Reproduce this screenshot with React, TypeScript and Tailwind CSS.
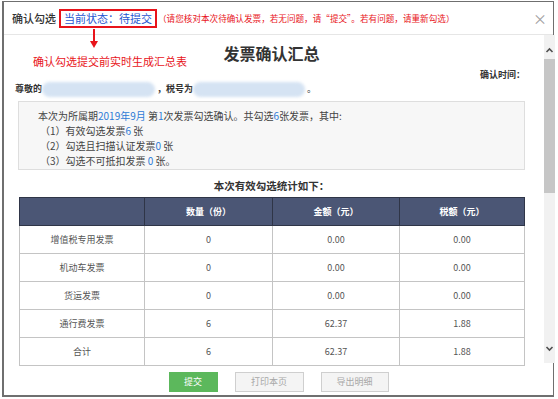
import React from 'react';

interface StatRow {
  name: string;
  count: string;
  amount: string;
  tax: string;
}

const rows: StatRow[] = [
  { name: '增值税专用发票', count: '0', amount: '0.00', tax: '0.00' },
  { name: '机动车发票', count: '0', amount: '0.00', tax: '0.00' },
  { name: '货运发票', count: '0', amount: '0.00', tax: '0.00' },
  { name: '通行费发票', count: '6', amount: '62.37', tax: '1.88' },
  { name: '合计', count: '6', amount: '62.37', tax: '1.88' },
];

const Blurred = ({ width }: { width: string }) => (
  <span className={`inline-block h-[15px] ${width} rounded-full bg-[#d5e3f3] blur-[1.5px]`} />
);

export default function App() {
  return (
    <div className="w-[558px] h-[399px] bg-white pt-px pl-[2px] font-['Noto_Sans_CJK_SC',sans-serif] overflow-hidden">
      <div className="relative w-[552px] h-[396px] border-t border-r border-l-2 border-b-2 border-[#6f6f6f] flex flex-col">
        {/* Header */}
        <div className="h-[33px] shrink-0 border-b border-[#e6e6e6] flex items-center pl-2 pr-[6px]">
          <span className="text-[11px] text-[#333] font-medium">确认勾选</span>
          <span className="ml-[3px] h-[19px] px-[3px] border-2 border-[#e8141b] flex items-center text-[11px] text-[#1f55d0]">
            当前状态：待提交
          </span>
          <span className="ml-[1px] text-[8.6px] text-[#e8141b] whitespace-nowrap">
            （请您核对本次待确认发票，若无问题，请“提交”。若有问题，请重新勾选）
          </span>
          <span className="ml-auto text-[14px] leading-none text-[#a0a0a0]">×</span>
        </div>

        {/* Body */}
        <div className="flex flex-1 min-h-0">
          <div className="flex-1 pl-[14px] pr-[19px] pt-[8px]">
            <h2 className="text-center text-[16px] leading-[20px] font-bold text-[#333]">发票确认汇总</h2>
            <div className="h-[12px] mt-[6px] flex justify-end items-center text-[9px] font-bold text-[#333]">
              确认时间：
            </div>
            <div className="h-[16px] flex items-center text-[9px] text-[#333] -ml-[3px]">
              <span className="font-bold">尊敬的</span>
              <Blurred width="w-[113px]" />
              <span className="font-bold ml-[2px]">，税号为</span>
              <Blurred width="w-[112px]" />
              <span className="ml-[2px]">。</span>
            </div>
            <div className="mt-[4px] h-[69px] border border-[#dedede] bg-[#f7f7f7] pl-[19px] pt-[6px] text-[10px] leading-[15px] text-[#444]">
              <p>
                本次为所属期<span className="text-[#2e7bd6]">2019年9月</span> 第<span className="text-[#2e7bd6]">1</span>次发票勾选确认。共勾选<span className="text-[#2e7bd6]">6</span>张发票，其中:
              </p>
              <p className="pl-[2px]">（1）有效勾选发票<span className="text-[#2e7bd6]">6</span> 张</p>
              <p className="pl-[2px]">（2）勾选且扫描认证发票<span className="text-[#2e7bd6]">0</span> 张</p>
              <p className="pl-[2px]">（3）勾选不可抵扣发票 <span className="text-[#2e7bd6]">0</span> 张。</p>
            </div>
            <h3 className="mt-[8px] text-center text-[10.5px] leading-[16px] font-bold text-[#333]">本次有效勾选统计如下：</h3>
            <table className="mt-[3px] ml-px w-[505px] border-collapse text-[9px] text-[#555] table-fixed">
              <colgroup>
                <col className="w-[125px]" />
                <col className="w-[128px]" />
                <col className="w-[127px]" />
                <col className="w-[125px]" />
              </colgroup>
              <thead>
                <tr className="h-[28px] bg-[#4b5675] text-white font-bold">
                  <th className="border border-[#2f3547]"></th>
                  <th className="border border-[#2f3547]">数量（份）</th>
                  <th className="border border-[#2f3547]">金额（元）</th>
                  <th className="border border-[#2f3547]">税额（元）</th>
                </tr>
              </thead>
              <tbody>
                {rows.map((r) => (
                  <tr key={r.name} className="h-[28px] text-center">
                    <td className="border border-[#c4c4c4]">{r.name}</td>
                    <td className="border border-[#c4c4c4]">{r.count}</td>
                    <td className="border border-[#c4c4c4]">{r.amount}</td>
                    <td className="border border-[#c4c4c4]">{r.tax}</td>
                  </tr>
                ))}
              </tbody>
            </table>
          </div>

          {/* Scrollbar */}
          <div className="w-[11px] shrink-0 bg-[#f1f1f1] flex flex-col items-center">
            <svg width="9" height="20" viewBox="0 0 9 20" className="shrink-0 mt-[1px]">
              <path d="M1.5 16 L4.5 13 L7.5 16" fill="none" stroke="#505050" strokeWidth="1.6" />
            </svg>
            <div className="mt-[3px] w-[11px] h-[134px] bg-[#c6c6c6]" />
            <div className="flex-1" />
            <svg width="9" height="20" viewBox="0 0 9 20" className="shrink-0 mb-[6px]">
              <path d="M1.5 10 L4.5 13 L7.5 10" fill="none" stroke="#505050" strokeWidth="1.6" />
            </svg>
          </div>
        </div>

        {/* Footer */}
        <div className="h-[32px] shrink-0 flex justify-center items-start pt-[9px] gap-[17px] text-[9px]">
          <button className="w-[49px] h-[20px] bg-[#5cb85c] text-white">提交</button>
          <button className="w-[69px] h-[20px] bg-[#f4f4f4] border border-[#cfcfcf] text-[#a8a8a8]">打印本页</button>
          <button className="w-[68px] h-[20px] bg-[#f4f4f4] border border-[#cfcfcf] text-[#a8a8a8]">导出明细</button>
        </div>

        {/* Annotation overlay */}
        <div className="absolute left-[86px] top-[27px] flex flex-col items-center">
          <div className="w-[2px] h-[12px] bg-[#e8141b]" />
          <div className="w-0 h-0 border-l-[4px] border-r-[4px] border-t-[7px] border-l-transparent border-r-transparent border-t-[#e8141b]" />
        </div>
        <div className="absolute left-[29px] top-[51px] text-[11px] leading-[16px] text-[#e8141b] whitespace-nowrap">
          确认勾选提交前实时生成汇总表
        </div>
      </div>
    </div>
  );
}
